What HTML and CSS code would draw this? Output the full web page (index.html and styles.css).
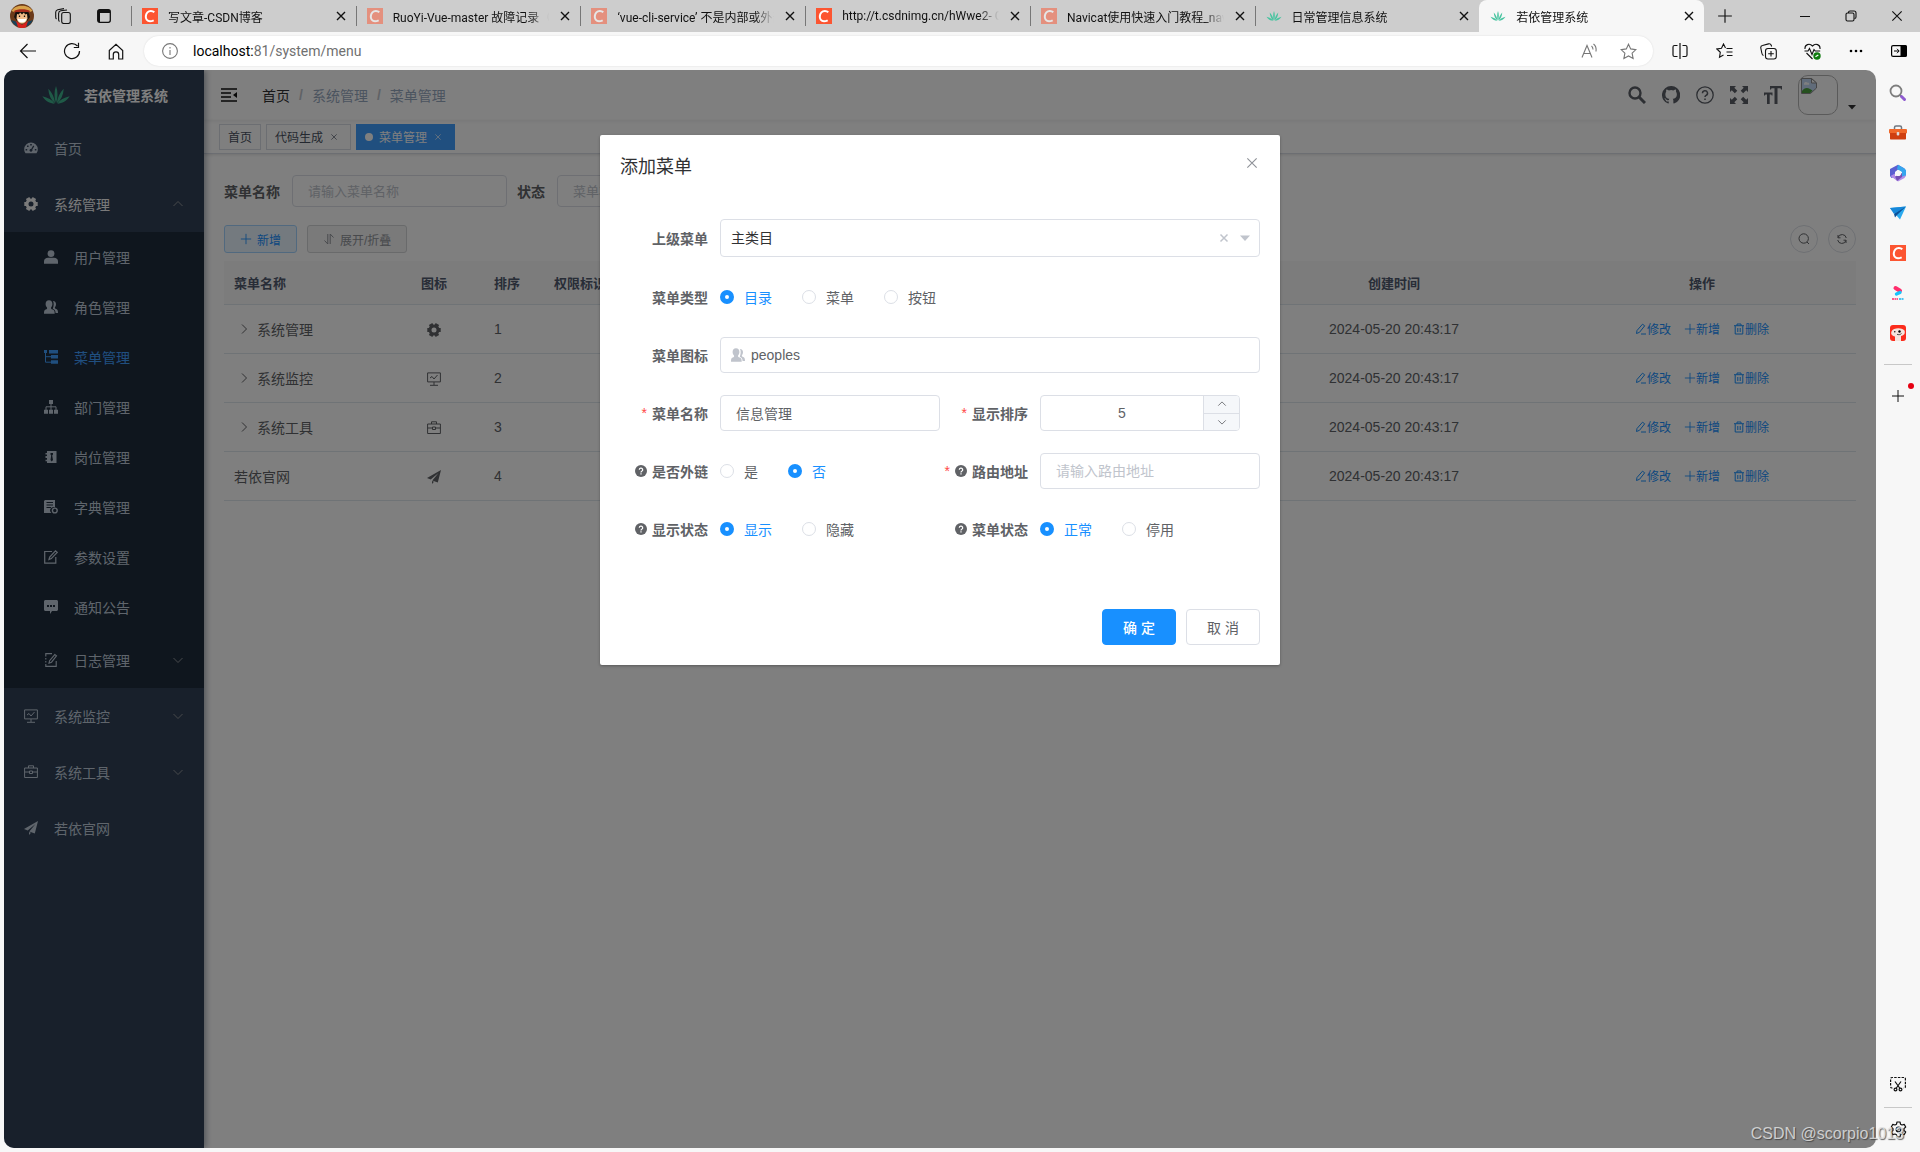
FILE: index.html
```html
<!DOCTYPE html>
<html lang="zh-CN">
<head>
<meta charset="utf-8">
<title>若依管理系统</title>
<link rel="stylesheet" href="styles.css">
</head>
<body>
<svg class="sprite" aria-hidden="true">
  <symbol id="i-x" viewBox="0 0 12 12"><path d="M2 2l8 8M10 2l-8 8" fill="none" stroke="currentColor"/></symbol>
  <symbol id="i-xbold" viewBox="0 0 12 12"><path d="M2 2l8 8M10 2l-8 8" fill="none" stroke="currentColor" stroke-width="1.400"/></symbol>
  <symbol id="i-csdn" viewBox="0 0 16 16"><path fill="#fc5531" d="M0 0h16v16H0z"/><path d="M12.300 4.300C10.500 2.700 7.300 2.500 5.400 4.400 3.500 6.400 3.300 9.800 4.700 11.700c1.500 1.900 4.600 1.800 7 .6" fill="none" stroke="#fff" stroke-width="2"/></symbol>
  <symbol id="i-leaf" viewBox="0 0 32 22"><path fill="currentColor" d="M16 20C13.800 14 13.800 7 16 1c2.200 6 2.200 13 0 19zM15 20C10.500 16.500 8 11 7.500 4 11.500 8 14.500 14 15 20zM17 20c4.500-3.500 7-9 7.500-16C20.500 8 17.500 14 17 20zM14.500 20.500C9 20.500 4.500 18 1 12.500 7 14 12 16.500 14.500 20.500zM17.500 20.500C23 20.500 27.500 18 31 12.500 25 14 20 16.500 17.500 20.500z"/></symbol>
  <symbol id="i-plus" viewBox="0 0 14 14"><path d="M7 1v12M1 7h12" fill="none" stroke="currentColor"/></symbol>
  <symbol id="i-up" viewBox="0 0 12 12"><path d="M1.500 8L6 3.500 10.500 8" fill="none" stroke="currentColor"/></symbol>
  <symbol id="i-down" viewBox="0 0 12 12"><path d="M1.500 4L6 8.500 10.500 4" fill="none" stroke="currentColor"/></symbol>
  <symbol id="i-right" viewBox="0 0 12 12"><path d="M4 1.500L8.500 6 4 10.500" fill="none" stroke="currentColor"/></symbol>
  <symbol id="i-caret" viewBox="0 0 10 10"><path d="M0 2.500h10L5 8z" fill="currentColor"/></symbol>
  <symbol id="i-dash" viewBox="0 0 14 14"><path fill="currentColor" fill-rule="evenodd" d="M7 1.500A6.800 6.800 0 0 0 .2 8.300c0 1.500.5 2.900 1.300 4h11c.8-1.100 1.300-2.500 1.300-4A6.800 6.800 0 0 0 7 1.500zM6.200 3h1.600v1.600H6.200zM3 4.500h1.600V6H3zM1.600 8h1.600v1.600H1.600zM10.800 8h1.600v1.600h-1.600zM9.200 4.600l1.100.6-2 3.400c.5 1-.1 2.200-1.300 2.200s-1.900-1.400-1.200-2.300c.4-.5.900-.6 1.400-.5z"/></symbol>
  <symbol id="i-gear" viewBox="0 0 14 14"><g fill="none" stroke="currentColor"><circle cx="7" cy="7" r="4" stroke-width="3"/><path d="M.3 7h3M10.700 7h3M3.600 1.100l1.500 2.600M8.900 10.300l1.500 2.600M10.400 1.100L8.900 3.700M5.100 10.300l-1.500 2.600" stroke-width="4"/></g></symbol>
  <symbol id="i-user" viewBox="0 0 14 14"><circle cx="7" cy="3.600" r="3.400" fill="currentColor"/><path fill="currentColor" d="M0 13.800v-2.500C0 9 1.800 7.800 4 7.800h6c2.200 0 4 1.200 4 3.500v2.500z"/></symbol>
  <symbol id="i-peoples" viewBox="0 0 14 14"><path fill="currentColor" d="M5 .2c2.200 0 3.400 1.600 3.400 3.700 0 1.500-.6 2.800-1.300 3.500-.3 1.200.2 1.500 1.600 2 1.500.6 2 1.400 2 4.400H0c0-3 .3-3.900 1.700-4.400 1.300-.5 1.700-.8 1.300-2C2.200 6.700 1.600 5.400 1.600 3.900 1.600 1.800 2.800.2 5 .2z"/><path fill="currentColor" d="M9 1c2 .2 3 1.500 3 3.300 0 1.400-.6 2.300-1.100 3-.2 1 .2 1.300 1.300 1.800 1.400.7 1.800 1.500 1.800 4h-2.400c-.1-2.600-.9-3.600-2.800-4.400C9.700 6.500 10.200 3 9 1z"/></symbol>
  <symbol id="i-tree" viewBox="0 0 14 14"><path fill="currentColor" d="M0 0h3v3H0zM5 0h9v3.500H5zM7 5h7v3.500H7zM7 10.300h7v3.500H7z"/><path d="M1.500 3v9.200H7M1.500 6.700H7" fill="none" stroke="currentColor"/></symbol>
  <symbol id="i-dept" viewBox="0 0 14 14"><path fill="currentColor" d="M5 0h4v4H5zM0 9.800h4v4H0zM5 9.800h4v4H5zM10 9.800h4v4h-4z"/><path d="M7 4v6M2 10V6.800h10V10" fill="none" stroke="currentColor"/></symbol>
  <symbol id="i-post" viewBox="0 0 14 14"><path fill="currentColor" fill-rule="evenodd" d="M3 1h9.500v12H3v-1.800H1.500v-1.400H3V8H1.500V6H3V4.500H1.500V3H3zM6.500 3v1.500l.7 1L6.500 10l1.200 1.500L9 10l-.8-4.500.8-1V3z"/></symbol>
  <symbol id="i-dict" viewBox="0 0 14 14"><path fill="currentColor" fill-rule="evenodd" d="M1 0h10v7.300A3.400 3.400 0 0 0 7.400 13H0V1zM2.500 2v1H9V2zM2.500 4.500v1H9v-1zM2.500 7v1H7V7z"/><circle cx="10.800" cy="10.500" r="2.400" fill="none" stroke="currentColor" stroke-width="1.400"/></symbol>
  <symbol id="i-edit" viewBox="0 0 14 14"><path d="M8 1.500H.7v11.700h11.100V7M5 9.500L5.700 7 11.500.9l1.700 1.500-5.900 6.200z" fill="none" stroke="currentColor" stroke-width="1.200"/></symbol>
  <symbol id="i-msg" viewBox="0 0 14 14"><path fill="currentColor" fill-rule="evenodd" d="M1.500 0h11C13.300 0 14 .7 14 1.500v8c0 .8-.7 1.500-1.500 1.500H8l-2 3v-3H1.500C.7 11 0 10.300 0 9.500v-8C0 .7.700 0 1.500 0zM3 5v2h2V5zM6 5v2h2V5zM9 5v2h2V5z"/></symbol>
  <symbol id="i-log" viewBox="0 0 14 14"><path d="M8 .6H1.800v3M1.800 5v1.500M1.800 8v1.500M1.800 11v2.400h10.400V8M5 10.200l.6-2.500L10.800 1.600l1.700 1.300-5 6.300z" fill="none" stroke="currentColor" stroke-width="1.100"/></symbol>
  <symbol id="i-monitor" viewBox="0 0 14 14"><path d="M.6.900h12.800v9H.6zM7 10v3M3 13.300h8M3 6l2-1.500 2 2.500 3.500-4" fill="none" stroke="currentColor"/></symbol>
  <symbol id="i-tool" viewBox="0 0 14 14"><path d="M.6 3h12.800v9.500H.6zM4.500 3V.8h5V3M.6 7H5M9 7h4.400M5.500 6h3v2.500h-3z" fill="none" stroke="currentColor"/></symbol>
  <symbol id="i-guide" viewBox="0 0 14 14"><path fill="currentColor" d="M14 0L0 8l3.700 1.600L11.500 3 5.300 10.400 10.800 12.400zM5 11v3l2-2.300z"/></symbol>
  <symbol id="i-search" viewBox="0 0 18 18"><circle cx="7" cy="7" r="5.500" fill="none" stroke="currentColor" stroke-width="2.400"/><path d="M11 11l6 6" stroke="currentColor" stroke-width="3"/></symbol>
  <symbol id="i-github" viewBox="0 0 16 16"><path fill="currentColor" d="M8 0a8 8 0 0 0-2.530 15.590c.4.070.55-.17.550-.38v-1.500C3.800 14.200 3.300 12.600 3.300 12.600c-.4-.9-.9-1.200-.9-1.200-.7-.5.1-.5.100-.5.8.1 1.200.8 1.200.8.700 1.300 1.900.9 2.400.7.100-.5.300-.9.500-1.100-1.800-.2-3.600-.9-3.600-4 0-.9.300-1.600.8-2.100-.1-.2-.4-1 .1-2.100 0 0 .7-.2 2.200.8a7.500 7.500 0 0 1 4 0c1.500-1 2.200-.8 2.200-.8.400 1.100.2 1.900.1 2.100.5.600.8 1.300.8 2.100 0 3.100-1.900 3.800-3.700 4 .3.300.6.800.6 1.500v2.400c0 .2.100.5.600.4A8 8 0 0 0 8 0z"/></symbol>
  <symbol id="i-help" viewBox="0 0 18 18"><circle cx="9" cy="9" r="8.200" fill="none" stroke="currentColor" stroke-width="1.300"/><path d="M6.500 7.200a2.500 2.500 0 1 1 3.600 2.200c-.8.500-1.100.8-1.100 1.700M9 12.500v1.600" fill="none" stroke="currentColor" stroke-width="1.500"/></symbol>
  <symbol id="i-full" viewBox="0 0 18 18"><path fill="currentColor" d="M0 0h6L4.300 1.800l3 3-2.500 2.500-3-3L0 6zM18 0v6l-1.800-1.700-3 3-2.500-2.500 3-3L12 0zM0 18v-6l1.800 1.700 3-3 2.500 2.500-3 3L6 18zM18 18h-6l1.700-1.800-3-3 2.500-2.500 3 3L18 12z"/></symbol>
  <symbol id="i-size" viewBox="0 0 18 18"><path fill="currentColor" d="M6 0h12v3.500h-1L16.500 2.300h-3V18h-3V2.300H7.500L7 3.500H6zM0 6.500h8.500v3h-.8L7.200 8.500H5.700V18H3V8.500H1.500L.8 9.500H0z"/></symbol>
  <symbol id="i-fold" viewBox="0 0 16 14"><path d="M0 1h16M0 5h10M0 9h10M0 13h16" stroke="currentColor" stroke-width="1.600"/><path d="M16 4v6l-4-3z" fill="currentColor"/></symbol>
  <symbol id="i-sort" viewBox="0 0 12 12"><path d="M4.800 1v10L1.500 7.500M7.200 11V1l3.300 3.500" fill="none" stroke="currentColor"/></symbol>
  <symbol id="i-search2" viewBox="0 0 12 12"><circle cx="5.700" cy="5.500" r="4.700" fill="none" stroke="currentColor"/><path d="M9 9l2 2" stroke="currentColor"/></symbol>
  <symbol id="i-refresh" viewBox="0 0 12 12"><path d="M2 2v2.800h2.500M2 4.500A4.300 4.300 0 0 1 10.300 5M10 10V7.200H7.500M10 7.500A4.300 4.300 0 0 1 1.700 7" fill="none" stroke="currentColor"/></symbol>
  <symbol id="i-pen" viewBox="0 0 12 12"><path d="M2 7.500L7.500 1.200l2.200 1.600-5.200 6.500L1.500 10.500zM6 11h5" fill="none" stroke="currentColor"/></symbol>
  <symbol id="i-trash" viewBox="0 0 12 12"><path d="M1 2.700h10M4 2.500V1h4v1.500M2.200 3v8h7.600V3M4.800 5v4M7.200 5v4" fill="none" stroke="currentColor"/></symbol>
  <symbol id="i-q" viewBox="0 0 12 12"><circle cx="6" cy="6" r="6" fill="currentColor"/><path d="M4.300 4.800a1.700 1.700 0 1 1 2.400 1.500c-.5.300-.7.500-.7 1.100M6 8.300v1.200" fill="none" stroke="#fff" stroke-width="1.200"/></symbol>
  <symbol id="i-clear" viewBox="0 0 10 10"><path d="M1.500 1.500l7 7M8.500 1.500l-7 7" fill="none" stroke="currentColor" stroke-width="1.500"/></symbol>
</svg>

<div class="browser">
  <header class="tabstrip">
    <div class="strip-left">
      <button class="icon-btn" aria-label="个人资料"><svg width="24" height="24" viewBox="0 0 24 24"><circle cx="12" cy="12" r="12" fill="#6b3a1a"/><path d="M1 16l6 2 5 4 5-4 6-2a12 12 0 0 1-22 0z" fill="#16425c"/><path d="M6 17l6 4 6-4-2 6.300a12 12 0 0 1-8 0z" fill="#d8201c"/><path d="M1.500 7C5 0 19 0 22.500 7l-4 1.500h-13z" fill="#d8a24a"/><path d="M4 7c3-2.500 13-2.500 16 0l-1 2H5z" fill="#a52a1c"/><path d="M5.500 8L4 13l3 4h10l3-4-1.500-5z" fill="#17100d"/><path d="M7 10l2 .6L10 8.500l2 2 2-2 1 2.100 2-.6.500 4.500c-1 3.500-3 5-5.500 5S7.500 18 6.500 14.500z" fill="#f3bd8a"/><path d="M7.500 14.500c3 .8 6 .8 9 0-.6 3-2.300 4-4.500 4s-3.900-1-4.500-4z" fill="#fff"/><path d="M9.500 11.500v1.500M14.500 11.500v1.500" stroke="#17100d" stroke-width="1.300"/></svg></button>
      <button class="icon-btn" aria-label="工作区"><svg width="16" height="16" viewBox="0 0 16 16" fill="none" stroke="#111" stroke-width="1.100"><rect x="6.700" y="4.500" width="8.600" height="11" rx="2"/><path d="M4.500 13.500c-.7-.5-.9-1-.9-2V5.500c0-1.500.8-2.400 2.200-2.700L12 2M1.500 11c-.6-.5-.8-1-.8-2V4.300c0-1.300.8-2.100 2-2.500L9 .6"/></svg></button>
      <button class="icon-btn" aria-label="标签页操作"><svg width="14" height="14" viewBox="0 0 14 14"><rect x=".7" y=".7" width="12.600" height="12.600" rx="2" fill="none" stroke="#111" stroke-width="1.300"/><path d="M1 1h12v3H1zM1 4h2v9H1z" fill="#111"/></svg></button>
    </div>
    <nav class="tabs" aria-label="标签页">
      <div class="tab"><svg class="fav"><use href="#i-csdn"/></svg><span class="tab-title">写文章-CSDN博客</span><button class="tab-close" aria-label="关闭"><svg><use href="#i-xbold"/></svg></button></div>
      <div class="tab"><svg class="fav faded"><use href="#i-csdn"/></svg><span class="tab-title">RuoYi-Vue-master 故障记录（</span><button class="tab-close" aria-label="关闭"><svg><use href="#i-xbold"/></svg></button></div>
      <div class="tab"><svg class="fav faded"><use href="#i-csdn"/></svg><span class="tab-title">‘vue-cli-service’ 不是内部或外部</span><button class="tab-close" aria-label="关闭"><svg><use href="#i-xbold"/></svg></button></div>
      <div class="tab"><svg class="fav"><use href="#i-csdn"/></svg><span class="tab-title">http://t.csdnimg.cn/hWwe2- C</span><button class="tab-close" aria-label="关闭"><svg><use href="#i-xbold"/></svg></button></div>
      <div class="tab"><svg class="fav faded"><use href="#i-csdn"/></svg><span class="tab-title">Navicat使用快速入门教程_nav</span><button class="tab-close" aria-label="关闭"><svg><use href="#i-xbold"/></svg></button></div>
      <div class="tab"><svg class="fav leaf"><use href="#i-leaf"/></svg><span class="tab-title">日常管理信息系统</span><button class="tab-close" aria-label="关闭"><svg><use href="#i-xbold"/></svg></button></div>
      <div class="tab current"><svg class="fav leaf"><use href="#i-leaf"/></svg><span class="tab-title">若依管理系统</span><button class="tab-close" aria-label="关闭"><svg><use href="#i-xbold"/></svg></button></div>
    </nav>
    <button class="icon-btn new-tab" aria-label="新建标签页"><svg width="16" height="16"><use href="#i-plus"/></svg></button>
    <div class="win-controls">
      <button class="icon-btn" aria-label="最小化"><svg width="12" height="12" viewBox="0 0 12 12"><path d="M1 6.500h10" stroke="#111"/></svg></button>
      <button class="icon-btn" aria-label="还原"><svg width="12" height="12" viewBox="0 0 12 12" fill="none" stroke="#111" stroke-width="1.100"><rect x="1" y="3" width="8" height="8" rx="1.500"/><path d="M3.500 3V2.500c0-1 .5-1.500 1.500-1.500h4c1.300 0 2 .7 2 2v4c0 1-.5 1.500-1.500 1.500"/></svg></button>
      <button class="icon-btn" aria-label="关闭窗口"><svg width="14" height="14"><use href="#i-x"/></svg></button>
    </div>
  </header>

  <div class="toolbar">
    <div class="nav-btns">
      <button class="icon-btn" aria-label="返回"><svg width="18" height="16" viewBox="0 0 18 16" fill="none" stroke="#111" stroke-width="1.200"><path d="M17 8H1.500M8.500 1l-7 7 7 7"/></svg></button>
      <button class="icon-btn" aria-label="刷新"><svg width="18" height="18" viewBox="0 0 18 18" fill="none" stroke="#111" stroke-width="1.200"><path d="M16.500 9A7.500 7.500 0 1 1 14.500 4M15.500.8V5.500H10.800"/></svg></button>
      <button class="icon-btn" aria-label="主页"><svg width="16" height="17" viewBox="0 0 16 17" fill="none" stroke="#111" stroke-width="1.200"><path d="M1.300 7.500L8 1.200l6.700 6.300V16h-4v-4.500a2.700 2.700 0 0 0-5.400 0V16h-4z"/></svg></button>
    </div>
    <div class="address">
      <svg width="16" height="16" viewBox="0 0 16 16" fill="none" stroke="#777" stroke-width="1.100"><circle cx="8" cy="8" r="7.400"/><path d="M8 7v5M8 4v1.400"/></svg>
      <span class="url"><b>localhost:</b>81/system/menu</span>
      <button class="icon-btn" aria-label="大声朗读"><svg width="17" height="16" viewBox="0 0 17 16" fill="none" stroke="#777" stroke-width="1.100"><path d="M1 14.500L6 2.500l5 12M2.800 10.500h6.400M10.500 3c1 .8 1.500 2 1.500 3.500M12.500 1c2 1.500 3 4 2.500 7.500"/></svg></button>
      <button class="icon-btn star" aria-label="收藏"><svg width="17" height="17" viewBox="0 0 17 17" fill="none" stroke="#777" stroke-width="1.100"><path d="M8.500 1.200l2.200 4.700 5.200.7-3.800 3.600 1 5.200-4.600-2.500-4.600 2.500 1-5.200L1.100 6.600l5.200-.7z"/></svg></button>
    </div>
    <div class="tool-btns">
      <button class="icon-btn" aria-label="拆分屏幕"><svg width="16" height="16" viewBox="0 0 16 16" fill="none" stroke="#111" stroke-width="1.200"><path d="M5.500 2.500h-3C1.500 2.500 1 3 1 4v8c0 1 .5 1.500 1.500 1.500h3M10.500 2.500h3c1 0 1.500.5 1.500 1.500v8c0 1-.5 1.500-1.500 1.500h-3M8 0v16"/></svg></button>
      <button class="icon-btn" aria-label="收藏夹"><svg width="17" height="16" viewBox="0 0 17 16" fill="none" stroke="#111" stroke-width="1.100"><path d="M9.500 5L7.500 1 5.500 5.300.9 6l3.400 3.300-.8 5 4-2.200M10.500 5.500h6M10.500 9h6M11 12.500h5.500"/></svg></button>
      <button class="icon-btn" aria-label="集锦"><svg width="17" height="17" viewBox="0 0 17 17" fill="none" stroke="#111" stroke-width="1.100"><rect x="5.500" y="5.500" width="10.800" height="10.500" rx="2.500"/><path d="M11 8v5.500M8.200 10.800h5.600M3.500 12.500C2.200 12 2 11 1.800 10L.8 5C.6 3.800 1.200 2.800 2.500 2.500l6-1.600c1.500-.3 2.300.2 2.700 1.300l.4 1.300"/></svg></button>
      <button class="icon-btn" aria-label="浏览器概要"><svg width="17" height="17" viewBox="0 0 17 17" fill="none" stroke="#111" stroke-width="1.100"><path d="M1 6C.5 1.500 5.500-.2 8.500 3c3-3.200 8-1.500 7.500 3M2.500 10l6 6M.5 8h3.500l1.500-2.500 2.500 6 2-5 1.200 1.500h5"/><circle cx="13" cy="13" r="3.700" fill="#107c10" stroke="none"/><path d="M11.500 13.800l2.800-1.800" stroke="#fff"/></svg></button>
      <button class="icon-btn" aria-label="更多"><svg width="14" height="4" viewBox="0 0 14 4"><circle cx="2" cy="2" r="1.300"/><circle cx="7" cy="2" r="1.300"/><circle cx="12" cy="2" r="1.300"/></svg></button>
    </div>
    <button class="icon-btn side-toggle" aria-label="边栏"><svg width="16" height="12" viewBox="0 0 16 12"><rect x=".6" y=".6" width="14.800" height="10.800" rx="1.500" fill="none" stroke="#000" stroke-width="1.200"/><path d="M9.500 0H14a2 2 0 0 1 2 2v8a2 2 0 0 1-2 2H9.500z"/><path d="M3 6h5M6 3.800L8.200 6 6 8.200" fill="none" stroke="#000"/></svg></button>
  </div>

  <div class="viewport">
    <div class="page">
      <aside class="sidebar">
        <a class="logo" href="#"><svg><use href="#i-leaf"/></svg><span>若依管理系统</span></a>
        <ul class="menu">
          <li><a href="#"><svg><use href="#i-dash"/></svg><span>首页</span></a></li>
          <li>
            <a href="#" class="open"><svg><use href="#i-gear"/></svg><span>系统管理</span><svg class="arrow"><use href="#i-up"/></svg></a>
            <ul class="submenu">
              <li><a href="#"><svg><use href="#i-user"/></svg><span>用户管理</span></a></li>
              <li><a href="#"><svg><use href="#i-peoples"/></svg><span>角色管理</span></a></li>
              <li><a href="#" class="active"><svg><use href="#i-tree"/></svg><span>菜单管理</span></a></li>
              <li><a href="#"><svg><use href="#i-dept"/></svg><span>部门管理</span></a></li>
              <li><a href="#"><svg><use href="#i-post"/></svg><span>岗位管理</span></a></li>
              <li><a href="#"><svg><use href="#i-dict"/></svg><span>字典管理</span></a></li>
              <li><a href="#"><svg><use href="#i-edit"/></svg><span>参数设置</span></a></li>
              <li><a href="#"><svg><use href="#i-msg"/></svg><span>通知公告</span></a></li>
              <li><a href="#" class="tall"><svg><use href="#i-log"/></svg><span>日志管理</span><svg class="arrow"><use href="#i-down"/></svg></a></li>
            </ul>
          </li>
          <li><a href="#"><svg><use href="#i-monitor"/></svg><span>系统监控</span><svg class="arrow"><use href="#i-down"/></svg></a></li>
          <li><a href="#"><svg><use href="#i-tool"/></svg><span>系统工具</span><svg class="arrow"><use href="#i-down"/></svg></a></li>
          <li><a href="#"><svg><use href="#i-guide"/></svg><span>若依官网</span></a></li>
        </ul>
      </aside>

      <main class="main">
        <div class="navbar">
          <button class="icon-btn fold" aria-label="折叠菜单"><svg width="16" height="14"><use href="#i-fold"/></svg></button>
          <nav class="crumbs"><a href="#">首页</a><i>/</i><span>系统管理</span><i>/</i><span>菜单管理</span></nav>
          <div class="nav-tools">
            <button class="icon-btn" aria-label="搜索"><svg><use href="#i-search"/></svg></button>
            <button class="icon-btn" aria-label="源码"><svg><use href="#i-github"/></svg></button>
            <button class="icon-btn" aria-label="文档"><svg><use href="#i-help"/></svg></button>
            <button class="icon-btn" aria-label="全屏"><svg><use href="#i-full"/></svg></button>
            <button class="icon-btn" aria-label="布局大小"><svg><use href="#i-size"/></svg></button>
          </div>
          <button class="avatar" aria-label="用户菜单">
            <span class="avatar-box"><svg width="16" height="16" viewBox="0 0 16 16"><path d="M.5.500h10l5 4.500v5l-6 5.500h-9z" fill="#c3d9f5" stroke="#8a8a8a"/><path d="M10.500.5v4.500h5z" fill="#fff" stroke="#8a8a8a"/><path d="M1 15v-2c2-3 5-4 8-2l2.500 1.500L9.300 15z" fill="#4ba03c"/><path d="M3 5.500a2 2 0 0 1 3.500-.8 1.300 1.300 0 0 1 1.500 2H3z" fill="#fff"/></svg></span>
            <svg class="caret"><use href="#i-caret"/></svg>
          </button>
        </div>
        <div class="tags">
          <a href="#">首页</a>
          <a href="#">代码生成<svg><use href="#i-x"/></svg></a>
          <a href="#" class="on"><i></i>菜单管理<svg><use href="#i-x"/></svg></a>
        </div>

        <div class="content">
          <form class="filters">
            <label for="f-name">菜单名称</label>
            <input id="f-name" type="text" placeholder="请输入菜单名称">
            <label for="f-status">状态</label>
            <select id="f-status"><option>菜单状态</option></select>
          </form>
          <div class="actions">
            <button class="btn-sm add"><svg><use href="#i-plus"/></svg>新增</button>
            <button class="btn-sm fold-all"><svg><use href="#i-sort"/></svg>展开/折叠</button>
            <button class="round first" aria-label="隐藏搜索"><svg><use href="#i-search2"/></svg></button>
            <button class="round" aria-label="刷新"><svg><use href="#i-refresh"/></svg></button>
          </div>
          <table>
            <colgroup><col class="c-name"><col class="c-icon"><col class="c-sort"><col><col><col class="c-state"><col><col></colgroup>
            <thead><tr><th>菜单名称</th><th class="mid">图标</th><th>排序</th><th>权限标识</th><th></th><th></th><th class="mid">创建时间</th><th class="mid">操作</th></tr></thead>
            <tbody>
              <tr><td><span class="node"><svg><use href="#i-right"/></svg>系统管理</span></td><td class="mid"><svg><use href="#i-gear"/></svg></td><td>1</td><td></td><td></td><td></td><td class="mid">2024-05-20 20:43:17</td><td><div class="ops"><a href="#"><svg><use href="#i-pen"/></svg>修改</a><a href="#"><svg><use href="#i-plus"/></svg>新增</a><a href="#"><svg><use href="#i-trash"/></svg>删除</a></div></td></tr>
              <tr><td><span class="node"><svg><use href="#i-right"/></svg>系统监控</span></td><td class="mid"><svg><use href="#i-monitor"/></svg></td><td>2</td><td></td><td></td><td></td><td class="mid">2024-05-20 20:43:17</td><td><div class="ops"><a href="#"><svg><use href="#i-pen"/></svg>修改</a><a href="#"><svg><use href="#i-plus"/></svg>新增</a><a href="#"><svg><use href="#i-trash"/></svg>删除</a></div></td></tr>
              <tr><td><span class="node"><svg><use href="#i-right"/></svg>系统工具</span></td><td class="mid"><svg><use href="#i-tool"/></svg></td><td>3</td><td></td><td></td><td></td><td class="mid">2024-05-20 20:43:17</td><td><div class="ops"><a href="#"><svg><use href="#i-pen"/></svg>修改</a><a href="#"><svg><use href="#i-plus"/></svg>新增</a><a href="#"><svg><use href="#i-trash"/></svg>删除</a></div></td></tr>
              <tr><td>若依官网</td><td class="mid"><svg><use href="#i-guide"/></svg></td><td>4</td><td></td><td></td><td></td><td class="mid">2024-05-20 20:43:17</td><td><div class="ops"><a href="#"><svg><use href="#i-pen"/></svg>修改</a><a href="#"><svg><use href="#i-plus"/></svg>新增</a><a href="#"><svg><use href="#i-trash"/></svg>删除</a></div></td></tr>
            </tbody>
          </table>
        </div>
      </main>

      <div class="overlay">
        <form class="dialog" role="dialog" aria-labelledby="dlg-title">
          <div class="dialog-head"><h2 id="dlg-title">添加菜单</h2><button type="button" class="icon-btn" aria-label="关闭"><svg width="14" height="14"><use href="#i-x"/></svg></button></div>
          <div class="dialog-body">
            <div class="field wide"><label class="lab" for="parent">上级菜单</label>
              <div class="treeselect"><select id="parent"><option>主类目</option></select><button type="button" aria-label="清除"><svg><use href="#i-clear"/></svg></button><svg><use href="#i-caret"/></svg></div></div>
            <div class="field wide" role="radiogroup" aria-labelledby="l-type"><span class="lab" id="l-type">菜单类型</span>
              <div class="radios"><label><input type="radio" name="type" checked><span>目录</span></label><label><input type="radio" name="type"><span>菜单</span></label><label><input type="radio" name="type"><span>按钮</span></label></div></div>
            <div class="field wide"><label class="lab" for="icon">菜单图标</label>
              <div class="icon-input"><svg><use href="#i-peoples"/></svg><input id="icon" type="text" value="peoples"></div></div>
            <div class="field"><label class="lab" for="name"><em>*</em>菜单名称</label><input id="name" class="text" type="text" value="信息管理"></div>
            <div class="field"><label class="lab" for="order"><em>*</em>显示排序</label>
              <div class="number"><input id="order" type="number" value="5"><div class="steps"><button type="button" aria-label="增加"><svg><use href="#i-up"/></svg></button><button type="button" aria-label="减少"><svg><use href="#i-down"/></svg></button></div></div></div>
            <div class="field" role="radiogroup" aria-labelledby="l-link"><span class="lab" id="l-link"><svg><use href="#i-q"/></svg>是否外链</span>
              <div class="radios"><label><input type="radio" name="link"><span>是</span></label><label><input type="radio" name="link" checked><span>否</span></label></div></div>
            <div class="field"><label class="lab" for="path"><em>*</em><svg><use href="#i-q"/></svg>路由地址</label><input id="path" class="text" type="text" placeholder="请输入路由地址"></div>
            <div class="field" role="radiogroup" aria-labelledby="l-show"><span class="lab" id="l-show"><svg><use href="#i-q"/></svg>显示状态</span>
              <div class="radios"><label><input type="radio" name="show" checked><span>显示</span></label><label><input type="radio" name="show"><span>隐藏</span></label></div></div>
            <div class="field" role="radiogroup" aria-labelledby="l-state"><span class="lab" id="l-state"><svg><use href="#i-q"/></svg>菜单状态</span>
              <div class="radios"><label><input type="radio" name="state" checked><span>正常</span></label><label><input type="radio" name="state"><span>停用</span></label></div></div>
          </div>
          <div class="dialog-foot"><button type="button" class="btn primary">确 定</button><button type="button" class="btn">取 消</button></div>
        </form>
      </div>
    </div>

    <aside class="edge-bar">
      <button class="icon-btn" aria-label="搜索"><svg width="18" height="18" viewBox="0 0 18 18" fill="none"><circle cx="7" cy="7" r="5.500" stroke="#7d7d7d" stroke-width="1.800"/><path d="M11 11l1.500 1.500" stroke="#7d7d7d" stroke-width="1.800"/><path d="M12.500 12.500l3 3" stroke="#8f5bd0" stroke-width="3" stroke-linecap="round"/></svg></button>
      <button class="icon-btn" aria-label="工具"><svg width="18" height="18" viewBox="0 0 18 18"><path d="M5.500 6V3.500c0-1 .5-1.500 1.500-1.500h4c1 0 1.500.5 1.500 1.500V6" fill="none" stroke="#6f7780" stroke-width="1.500"/><rect y="5" width="18" height="4.500" rx="1" fill="#f0682a"/><path d="M1 9h16v5.500c0 .6-.4 1-1 1H2c-.6 0-1-.4-1-1z" fill="#cf3f10"/><rect x="7.700" y="8" width="2.600" height="3.500" rx="1" fill="#ddd"/></svg></button>
      <button class="icon-btn" aria-label="Microsoft 365"><svg width="18" height="18" viewBox="0 0 18 18"><path d="M9 .8l6.500 3.700v3L9 5.500 6 8v4.500L2.500 14 1 12V5z" fill="#5b5fd0"/><path d="M9 .8l6.500 3.700L17 6v6l-4 2V8L8 5z" fill="#36a5ee"/><path d="M1.500 12L6 9.500v3l4 1.500 7-3-1.500 3L9 17.500z" fill="#b18be8"/><path d="M6 12.500L13 9v4l-5 4z" fill="#7450b5"/><circle cx="9.300" cy="9.200" r="2.800" fill="#f7f7f7"/></svg></button>
      <button class="icon-btn" aria-label="Drop"><svg width="18" height="18" viewBox="0 0 18 18"><path d="M1 4l16-1.500-6 13z" fill="#29a9ee"/><path d="M1 4l16-1.500L5 10z" fill="#1687d9"/><path d="M5 10l12-7.500L8 11l-2 2.500z" fill="#0b4f98"/></svg></button>
      <button class="icon-btn" aria-label="CSDN"><svg width="16" height="16"><use href="#i-csdn"/></svg></button>
      <button class="icon-btn" aria-label="优酷"><svg width="16" height="16" viewBox="0 0 16 16"><path d="M5.500 3l4.500 2.800" stroke="#ff2e6c" stroke-width="4" stroke-linecap="round"/><path d="M10 7.500L6.500 9" stroke="#19c3fb" stroke-width="3.400" stroke-linecap="round"/><path d="M2 14h6" stroke="#ff5a8c" stroke-width="1.800" stroke-dasharray="2 .5"/><path d="M9 14h5" stroke="#4ac4f0" stroke-width="1.800" stroke-dasharray="2 .5"/></svg></button>
      <button class="icon-btn" aria-label="京东"><svg width="16" height="16" viewBox="0 0 16 16"><rect width="16" height="16" rx="3" fill="#fb2c1c"/><path d="M1.500 6.500C3 3 11 2 14.500 5.500c1 3-.5 5-3.500 5.500v5H5v-4.500C2 11 .5 9 1.500 6.500z" fill="#f5e4dc"/><circle cx="9.500" cy="6.500" r="1.200"/><circle cx="4.800" cy="6.800" r=".7"/><path d="M7 9.300c1.500.7 3.500.4 4.500-.8" fill="none" stroke="#222" stroke-width=".8"/></svg></button>
      <hr>
      <button class="icon-btn plus" aria-label="添加"><svg width="14" height="14"><use href="#i-plus"/></svg><span class="dot"></span></button>
      <button class="icon-btn snip" aria-label="截图"><svg width="16" height="16" viewBox="0 0 16 16" fill="none" stroke="#111" stroke-width="1.200"><path d="M2.500 12H2c-1 0-1.400-.5-1.400-1.400V3C.6 2 1 1.500 2 1.500h12c1 0 1.400.5 1.400 1.500v7.500c0 1-.4 1.500-1.400 1.500h-.5" stroke-dasharray="2.500 1.200"/><path d="M5 5.500l5 7M11 5.500l-5 7"/><circle cx="5.500" cy="13.500" r="1.400"/><circle cx="10.500" cy="13.500" r="1.400"/></svg></button>
      <hr>
      <button class="icon-btn settings" aria-label="设置"><svg width="17" height="17" viewBox="0 0 17 17" fill="none" stroke="#111" stroke-width="1.200"><path d="M7 1h3l.5 2.200 1.500.8 2.200-.6 1.500 2.600L14 7.600v1.800l1.700 1.600-1.500 2.600-2.200-.6-1.500.8L10 16H7l-.5-2.200L5 13l-2.200.6L1.300 11 3 9.400V7.600L1.300 6l1.500-2.600L5 4l1.500-.8z" stroke-linejoin="round"/><circle cx="8.500" cy="8.500" r="2.300"/></svg></button>
    </aside>
  </div>
  <div class="watermark">CSDN @scorpio1013</div>
</div>
</body>
</html>
```

FILE: styles.css
```css
* { box-sizing: border-box; }
body {
  margin: 0;
  font-family: "Liberation Sans", "Noto Sans CJK SC", sans-serif;
  font-size: 14px;
  color: #606266;
}
a { color: inherit; text-decoration: none; }
button, input, select { font: inherit; color: inherit; margin: 0; }
ul { list-style: none; margin: 0; padding: 0; }
.sprite { position: absolute; width: 0; height: 0; }
.icon-btn {
  display: flex;
  align-items: center;
  justify-content: center;
  padding: 0;
  border: 0;
  background: none;
  color: inherit;
}

/* browser frame */
.browser {
  position: relative;
  display: flex;
  flex-direction: column;
  min-height: 100vh;
  background: #f7f7f7;
}
.tabstrip {
  display: flex;
  height: 32px;
  background: #cdcdcd;
  color: #111;
  font-family: Roboto, "Noto Sans CJK SC", sans-serif;
  font-size: 12px;
}
.strip-left { display: flex; width: 131px; padding-left: 10px; gap: 17px; }
.strip-left .icon-btn { min-width: 24px; }
.tabs { display: flex; flex: 0 1 1573px; min-width: 0; }
.tab {
  display: flex;
  align-items: center;
  flex: 1 1 0;
  min-width: 0;
  padding: 0 9px 0 11px;
  gap: 10px;
  background: linear-gradient(#777, #777) left center / 1px 20px no-repeat;
}
.tab.current { background: #f7f7f7; border-radius: 8px 8px 0 0; }
.fav { flex: none; width: 16px; height: 16px; }
.fav.faded { opacity: .5; }
.fav.leaf { width: 16px; height: 12px; color: #47c4a0; }
.tab-title {
  flex: 1;
  overflow: hidden;
  white-space: nowrap;
  mask-image: linear-gradient(90deg, #000 calc(100% - 20px), transparent);
}
.tab-close { display: flex; flex: none; padding: 0; border: 0; background: none; }
.tab-close svg { width: 12px; height: 12px; }
.new-tab { width: 42px; }
.win-controls { display: flex; margin-left: auto; }
.win-controls .icon-btn { width: 46px; }

.toolbar {
  display: flex;
  align-items: center;
  height: 38px;
}
.nav-btns { display: flex; width: 144px; padding-left: 6px; }
.nav-btns .icon-btn { width: 44px; }
.address {
  display: flex;
  align-items: center;
  flex: 1;
  height: 30px;
  padding: 0 16px 0 18px;
  border-radius: 15px;
  background: #fff;
  box-shadow: 0 0 2px rgba(0, 0, 0, .12);
}
.url {
  flex: 1;
  padding-left: 15px;
  font-family: Roboto, sans-serif;
  color: #707070;
}
.url b { font-weight: 400; color: #000; }
.address .star { margin-left: 22px; }
.tool-btns { display: flex; padding-left: 5px; }
.tool-btns .icon-btn { width: 44px; }
.side-toggle { width: 42px; }

.viewport { display: flex; flex: 1; }
.page {
  position: relative;
  display: flex;
  flex: 1;
  min-width: 0;
  margin: 0 0 4px 4px;
  border-radius: 10px;
  overflow: hidden;
  background: #fff;
}

/* application sidebar */
.sidebar {
  z-index: 1;
  flex: none;
  width: 200px;
  background: #304156;
  color: #bfcbd9;
  box-shadow: 2px 0 6px rgba(0, 21, 41, .35);
}
.logo {
  display: flex;
  align-items: center;
  justify-content: center;
  height: 50px;
  gap: 12px;
  color: #fff;
  font-weight: 700;
}
.logo svg { width: 32px; height: 20px; color: #3fb58f; }
.menu a {
  display: flex;
  align-items: center;
  height: 56px;
  padding: 0 20px;
  gap: 16px;
}
.menu svg { flex: none; width: 14px; height: 14px; }
.menu .arrow { width: 12px; height: 12px; margin-left: auto; color: #909399; }
.menu .open { color: #f4f4f5; }
.submenu { background: #1f2d3d; }
.menu .submenu a { height: 50px; padding-left: 40px; }
.menu .submenu .tall { height: 56px; }
.menu .active { color: #409eff; }

/* top bars */
.main { flex: 1; min-width: 0; }
.navbar {
  display: flex;
  align-items: center;
  height: 50px;
  padding: 0 20px 0 17px;
  box-shadow: 0 1px 4px rgba(0, 21, 41, .08);
}
.fold { color: #111; }
.crumbs { display: flex; align-items: center; gap: 9px; padding-left: 25px; color: #97a8be; }
.crumbs a { color: #303133; }
.crumbs i { font-style: normal; font-weight: 700; color: #c0c4cc; }
.nav-tools { display: flex; gap: 16px; margin-left: auto; color: #5a5e66; }
.nav-tools svg { width: 18px; height: 18px; }
.avatar {
  display: flex;
  align-items: flex-end;
  gap: 10px;
  padding: 0 0 0 16px;
  border: 0;
  background: none;
  color: #303133;
}
.avatar-box {
  display: flex;
  width: 40px;
  height: 40px;
  padding: 2px;
  border: 1px solid #b4b4b4;
  border-radius: 10px;
}
.caret { width: 8px; height: 16px; }
.tags {
  display: flex;
  align-items: center;
  height: 34px;
  padding-left: 15px;
  gap: 5px;
  border-bottom: 1px solid #d8dce5;
  box-shadow: 0 1px 3px rgba(0, 0, 0, .12);
  font-size: 12px;
}
.tags a {
  display: flex;
  align-items: center;
  height: 26px;
  padding: 0 8px;
  border: 1px solid #d8dce5;
  color: #495060;
}
.tags svg { width: 8px; height: 8px; margin: 0 4px 0 7px; }
.tags .on { background: #409eff; border-color: #409eff; color: #fff; }
.tags i { width: 8px; height: 8px; margin-right: 6px; border-radius: 50%; background: #fff; }

/* list page */
.content { padding: 21px 20px; }
.filters { display: flex; align-items: center; }
.filters label { padding-right: 12px; font-weight: 700; }
.filters input, .filters select {
  appearance: none;
  width: 215px;
  height: 32px;
  margin-right: 10px;
  padding: 0 15px;
  border: 1px solid #dcdfe6;
  border-radius: 4px;
  background: #fff;
  color: #c0c4cc;
  font-size: 13px;
}
::placeholder { color: #c0c4cc; opacity: 1; }
.actions { display: flex; gap: 10px; padding: 18px 0 8px; }
.btn-sm {
  display: flex;
  align-items: center;
  height: 28px;
  padding: 0 15px;
  gap: 5px;
  border: 1px solid;
  border-radius: 3px;
  font-size: 12px;
}
.btn-sm svg { width: 12px; height: 12px; }
.add { background: #e8f4ff; border-color: #a3d3ff; color: #1890ff; }
.fold-all { background: #f4f4f5; border-color: #d3d4d6; color: #909399; }
.round {
  display: flex;
  align-items: center;
  justify-content: center;
  width: 28px;
  height: 28px;
  padding: 0;
  border: 1px solid #dcdfe6;
  border-radius: 50%;
  background: #fff;
}
.round svg { width: 12px; height: 12px; }
.round.first { margin-left: auto; }
table { width: 100%; table-layout: fixed; border-collapse: collapse; }
.c-name { width: 160px; }
.c-icon { width: 100px; }
.c-sort { width: 60px; }
.c-state { width: 80px; }
th, td {
  padding: 0 10px;
  border-bottom: 1px solid #dfe6ec;
  text-align: left;
  white-space: nowrap;
}
th { height: 43px; background: #f8f8f9; color: #515a6e; font-size: 13px; }
td { height: 49px; }
th.mid, td.mid { text-align: center; }
td svg { width: 14px; height: 14px; vertical-align: middle; }
.node { display: flex; align-items: center; gap: 7px; padding-left: 4px; }
.node svg { width: 12px; height: 12px; }
.ops { display: flex; justify-content: center; gap: 13px; color: #1890ff; font-size: 12px; }
.ops a { display: flex; align-items: center; }
.ops svg { width: 12px; height: 12px; }

/* dialog */
.overlay {
  position: absolute;
  z-index: 2;
  inset: 0;
  padding-top: 65px;
  background: rgba(0, 0, 0, .5);
}
.dialog {
  width: 680px;
  margin: 0 auto;
  border-radius: 2px;
  background: #fff;
  box-shadow: 0 1px 3px rgba(0, 0, 0, .3);
}
.dialog-head {
  display: flex;
  justify-content: space-between;
  padding: 20px 21px 10px 20px;
  color: #909399;
}
.dialog-head h2 { margin: 0; color: #303133; font-size: 18px; font-weight: 400; line-height: 24px; }
.dialog-head .icon-btn { height: 16px; }
.dialog-body {
  display: grid;
  grid-template-columns: 1fr 1fr;
  row-gap: 22px;
  padding: 30px 20px 62px;
}
.field { display: flex; align-items: center; min-height: 36px; }
.wide { grid-column: 1 / -1; }
.lab {
  display: flex;
  flex: none;
  align-items: center;
  justify-content: flex-end;
  width: 100px;
  padding-right: 12px;
  gap: 5px;
  font-weight: 700;
}
.lab svg { width: 12px; height: 12px; }
.lab em { color: #ff4949; font-style: normal; font-weight: 400; }
.field .text, .icon-input, .treeselect, .number {
  flex: 1;
  min-width: 0;
  height: 36px;
  border: 1px solid #dcdfe6;
  border-radius: 4px;
  background: #fff;
}
.field .text { padding: 0 15px; }
.icon-input, .treeselect { display: flex; align-items: center; padding-left: 10px; }
.icon-input { gap: 6px; }
.icon-input svg { width: 14px; height: 14px; color: #c0c4cc; }
.icon-input input, .treeselect select, .number input {
  flex: 1;
  min-width: 0;
  height: 100%;
  padding: 0;
  border: 0;
  background: none;
  appearance: none;
}
.field .treeselect { height: 38px; padding-right: 9px; color: #c0c4cc; }
.treeselect select { color: #303133; }
.treeselect button { display: flex; padding: 0; margin-right: 11px; border: 0; background: none; color: inherit; }
.treeselect svg { width: 10px; height: 10px; }
.field .number { display: flex; flex: 0 0 200px; overflow: hidden; }
.number input { text-align: center; appearance: textfield; }
.number input::-webkit-inner-spin-button { appearance: none; margin: 0; }
.steps { display: flex; flex-direction: column; width: 36px; border-left: 1px solid #dcdfe6; background: #f5f7fa; }
.steps button {
  display: flex;
  flex: 1;
  align-items: center;
  justify-content: center;
  padding: 0;
  border: 0;
  background: none;
}
.steps button + button { border-top: 1px solid #dcdfe6; }
.steps svg { width: 10px; height: 10px; }
.radios { display: flex; gap: 30px; }
.radios label { display: flex; align-items: center; gap: 10px; }
.radios input {
  appearance: none;
  width: 14px;
  height: 14px;
  border: 1px solid #dcdfe6;
  border-radius: 50%;
  background: #fff;
}
.radios input:checked { border: 5px solid #1890ff; }
.radios input:checked + span { color: #1890ff; }
.dialog-foot { display: flex; justify-content: flex-end; gap: 10px; padding: 0 20px 20px; }
.btn {
  width: 74px;
  height: 36px;
  padding: 0;
  border: 1px solid #dcdfe6;
  border-radius: 4px;
  background: #fff;
}
.btn.primary { border-color: #1890ff; background: #1890ff; color: #fff; font-weight: 500; }

/* browser side bar */
.edge-bar {
  display: flex;
  flex-direction: column;
  align-items: center;
  flex: none;
  width: 44px;
  padding: 3px 0 5px;
}
.edge-bar .icon-btn { width: 40px; height: 40px; color: #111; }
.edge-bar hr { width: 28px; height: 1px; margin: 11px 0; border: 0; background: #c8c8c8; }
.edge-bar .plus { position: relative; }
.edge-bar .snip { margin-top: auto; height: 24px; }
.dot { position: absolute; top: 7px; right: 4px; width: 6px; height: 6px; border-radius: 50%; background: #e60012; }
.edge-bar .settings { height: 36px; margin-top: -8px; }
.watermark {
  position: absolute;
  right: 16px;
  bottom: 8px;
  z-index: 3;
  color: rgba(225, 225, 225, .85);
  font-size: 16px;
  line-height: 20px;
  text-shadow: 1px 1px 1px rgba(60, 60, 60, .8);
}
```
